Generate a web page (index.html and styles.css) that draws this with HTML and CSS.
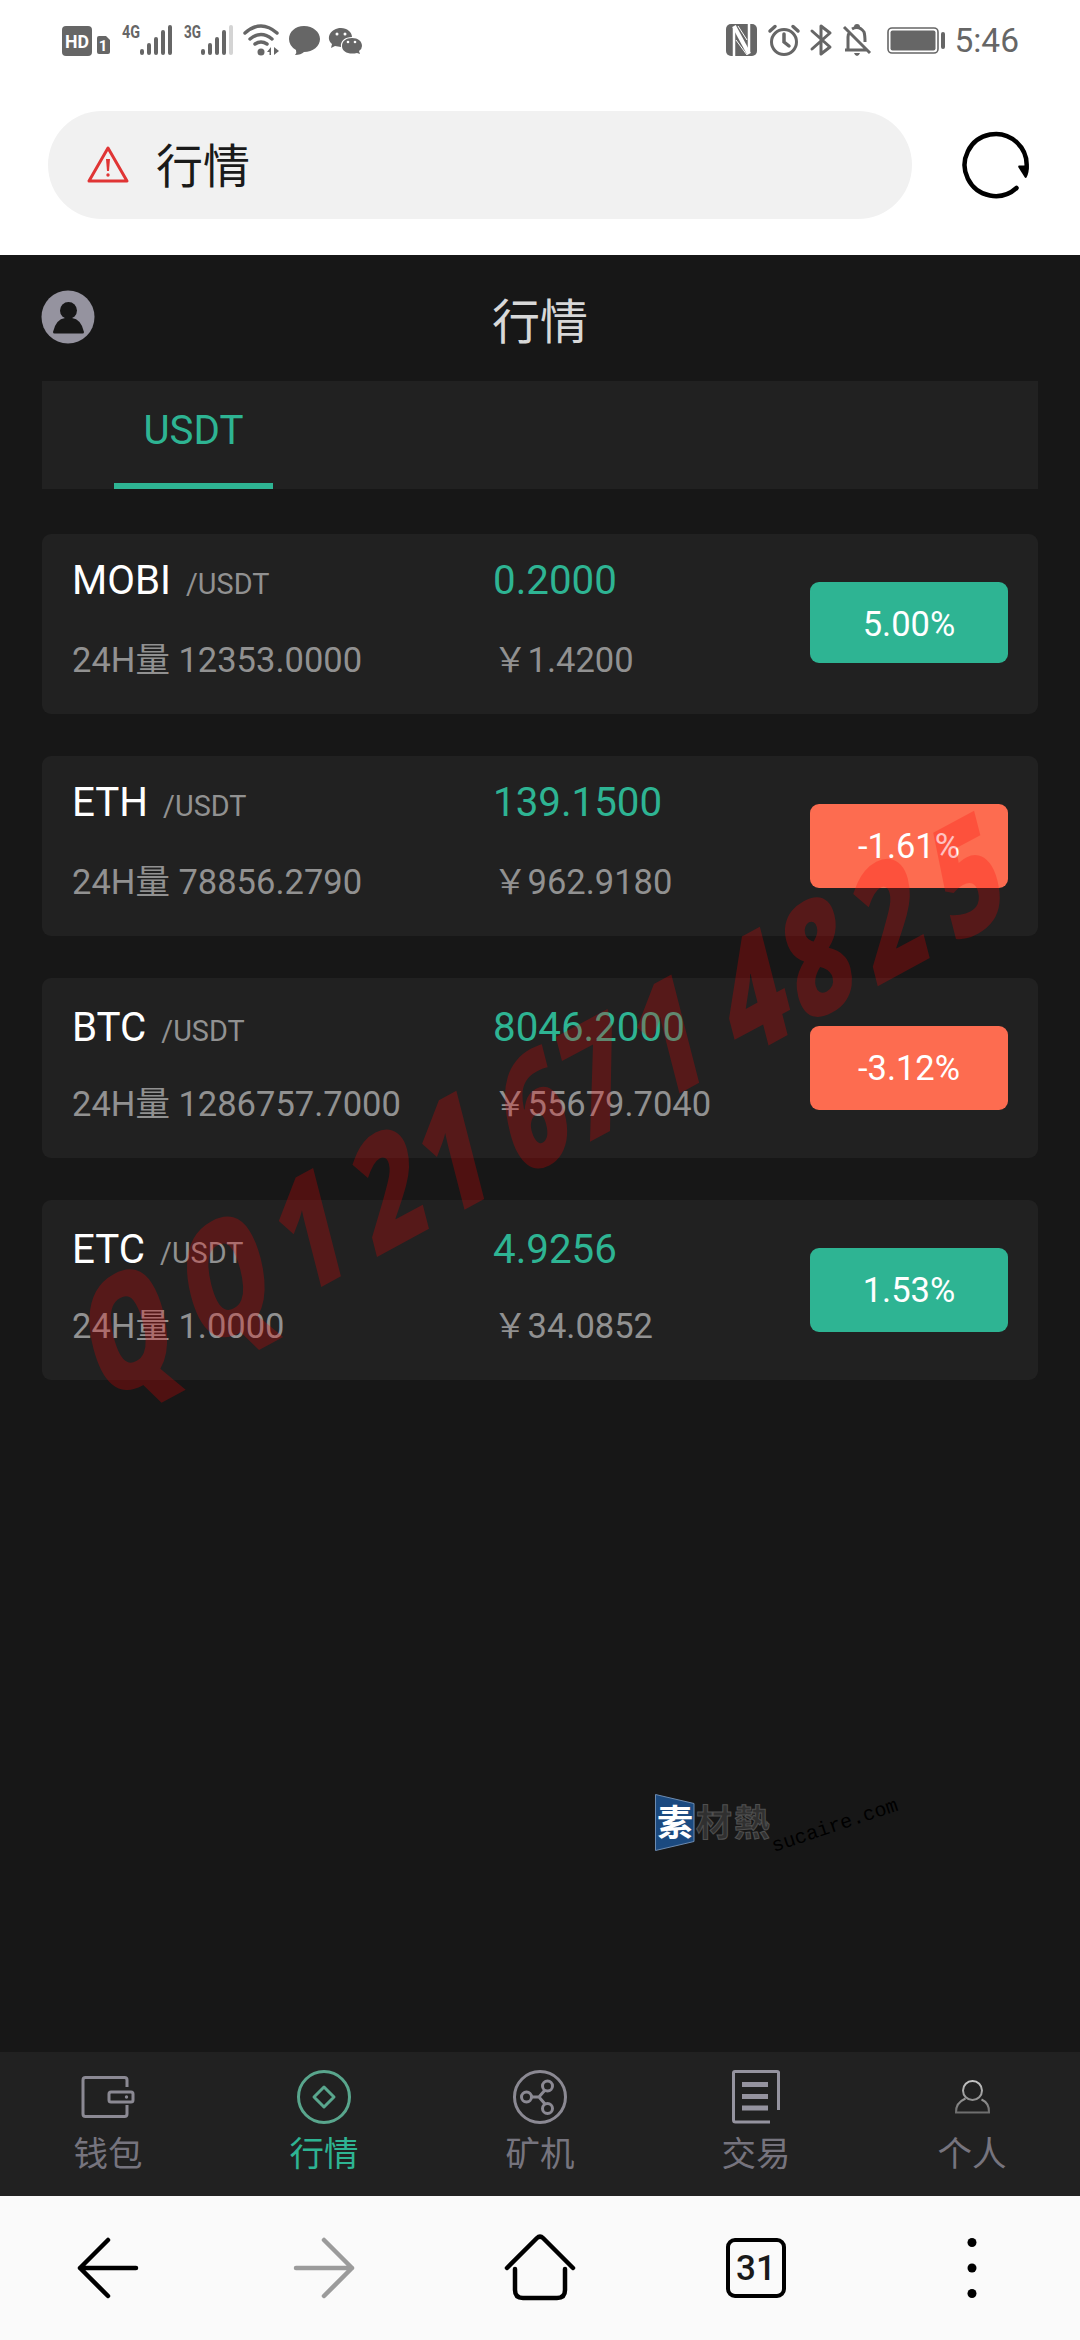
FILE: index.html
```html
<!DOCTYPE html>
<html lang="zh-CN">
<head>
    <meta charset="UTF-8">
    <meta name="viewport" content="width=device-width, initial-scale=1.0">
    <title>行情</title>
    <link rel="stylesheet" href="styles.css">
</head>
<body>
    <div class="status-bar">
        <div class="status-group">
            <svg width="32" height="32" viewBox="0 0 32 32">
                <rect x="0" y="2" width="30" height="30" rx="4" fill="#666"/>
                <text x="15" y="23.500" class="status-text hd" textLength="24" lengthAdjust="spacingAndGlyphs">HD</text>
            </svg>
            <svg width="24" height="32" viewBox="0 0 24 32">
                <path d="M5 12h7l4 4v12q0 2-2 2H5q-2 0-2-2V14q0-2 2-2z" fill="#666"/>
                <text x="9" y="27" class="status-text sim">1</text>
            </svg>
            <svg width="62" height="32" viewBox="0 0 62 32">
                <text x="4" y="14" class="status-text net" textLength="18" lengthAdjust="spacingAndGlyphs">4G</text>
                <path d="M24 27v2M31 21v8M38 15v14M45 8v21M52 3v26" class="bar"/>
            </svg>
            <svg width="60" height="32" viewBox="0 0 60 32">
                <text x="4" y="14" class="status-text net" textLength="17" lengthAdjust="spacingAndGlyphs">3G</text>
                <path d="M23 27v2M30 21v8M37 15v14M44 8v21" class="bar"/>
                <path d="M51 3v26" class="bar off"/>
            </svg>
            <svg width="44" height="32" viewBox="0 0 44 32">
                <g fill="none" stroke="#666" stroke-width="3.500" stroke-linecap="round">
                    <path d="M5 9Q21-5 37 9M10 15Q21 6 32 15M15 20Q21 16 27 20"/>
                </g>
                <circle cx="21" cy="28" r="3.500" fill="#666"/>
                <path d="M31 23v8h-1.500v-3H27zM34 23l5 4-5 4z" fill="#666"/>
            </svg>
            <svg width="41" height="32" viewBox="0 0 41 32">
                <path d="M20 2c9 0 16 6 16 13s-7 13-16 13q-3 3-9 3 2-2 1-5-7-4-7-11C5 8 11 2 20 2z" fill="#666"/>
            </svg>
            <svg width="40" height="32" viewBox="0 0 40 32">
                <path d="M16 4c6 0 11 4 11 9-7 0-12 4-11 10l-6-1-4 2 1-4c-7-6-1-16 9-16z" fill="#666"/>
                <path d="M27 14c6 0 10 3 10 8q0 3-3 5l1 3-3-1c-8 2-15-1-15-7 0-5 4-8 10-8z" fill="#666"/>
                <g fill="#fff"><circle cx="12" cy="10" r="1.500"/><circle cx="20" cy="10" r="1.500"/><circle cx="23" cy="18" r="1.300"/><circle cx="30" cy="18" r="1.300"/></g>
            </svg>
        </div>
        <div class="status-group">
            <svg width="42" height="32" viewBox="0 0 42 32">
                <rect x="0" y="0" width="31" height="32" rx="5" fill="#666"/>
                <path d="M8 3v29M23 29V0" stroke="#fff" stroke-width="2.500"/>
                <path d="M8 2l15 28" stroke="#fff" stroke-width="4"/>
                <path d="M10 16l11 15M12 2l9 14" stroke="#fff" stroke-width="1"/>
            </svg>
            <svg width="42" height="32" viewBox="0 0 42 32">
                <g fill="none" stroke="#666" stroke-width="3">
                    <circle cx="16" cy="18" r="12.500"/>
                    <path d="M2 7l5-4.500M30 7l-5-4.500M16 10v8l5 4" stroke-width="3.500" stroke-linecap="round"/>
                </g>
            </svg>
            <svg width="32" height="32" viewBox="0 0 32 32">
                <path d="M2 7l18 16-9 7V2l9 7L2 25" fill="none" stroke="#666" stroke-width="3" stroke-linejoin="round" stroke-linecap="round"/>
            </svg>
            <svg width="45" height="32" viewBox="0 0 45 32">
                <g fill="none" stroke="#666" stroke-width="3">
                    <path d="M2 3l26 26M3 26h22M6 25V13q0-3 2-5M10 5q7-4 12 3 1 3 1 10"/>
                </g>
                <path d="M12 3q0-3 3-3t3 3zM12 29h6q-1 3-3 3t-3-3z" fill="#666"/>
            </svg>
            <svg width="67" height="32" viewBox="0 0 67 32">
                <rect x="1" y="4" width="50" height="25" rx="4" fill="none" stroke="#666" stroke-width="1.600"/>
                <rect x="3.500" y="6.500" width="45" height="20" rx="2" fill="#666"/>
                <rect x="54" y="8" width="4" height="17" rx="2" fill="#666"/>
            </svg>
            <span class="clock">5:46</span>
        </div>
    </div>

    <div class="address-bar">
        <div class="address-field">
            <svg width="44" height="40" viewBox="0 0 44 40">
                <path d="M22 3L41 36H3z" fill="none" stroke="#e03535" stroke-width="3" stroke-linejoin="round"/>
                <path d="M20 14h4l-1 12h-2z" fill="#e03535"/>
                <circle cx="22" cy="30" r="1.700" fill="#e03535"/>
            </svg>
            <span class="address-title">行情</span>
        </div>
        <svg class="reload" width="68" height="68" viewBox="0 0 68 68">
            <path d="M54.500 57A31 31 0 1 1 64.500 37" fill="none" stroke="#000" stroke-width="4.500" stroke-linecap="round"/>
            <path d="M57 34.500h9.500q1 6-2 12-1 1-2-.5l-6-9.500q-1-2 .5-2z"/>
        </svg>
    </div>

    <div class="app">
        <header class="app-header">
            <svg width="52" height="52" viewBox="0 0 52 52">
                <circle cx="26" cy="26" r="26.500" fill="#95939f"/>
                <circle cx="26.500" cy="19.500" r="8.500" fill="#171717"/>
                <path d="M11 41q3-13 12-14h7q9 1 12 14 0 1.500-1.500 1.500h-28Q11 42.500 11 41z" fill="#171717"/>
            </svg>
            <h1>行情</h1>
        </header>

        <nav class="tabs">
            <a class="tab active">USDT</a>
        </nav>

        <main class="market-list">
            <div class="market">
                <div class="pair">
                    <p class="top"><span class="coin">MOBI</span><span class="base">/USDT</span></p>
                    <p class="sub">24H量 12353.0000</p>
                </div>
                <div class="price">
                    <p class="top">0.2000</p>
                    <p class="sub">￥1.4200</p>
                </div>
                <div class="change up short">5.00%</div>
            </div>
            <div class="market">
                <div class="pair">
                    <p class="top"><span class="coin">ETH</span><span class="base">/USDT</span></p>
                    <p class="sub">24H量 78856.2790</p>
                </div>
                <div class="price">
                    <p class="top">139.1500</p>
                    <p class="sub">￥962.9180</p>
                </div>
                <div class="change down">-1.61%</div>
            </div>
            <div class="market low">
                <div class="pair">
                    <p class="top"><span class="coin">BTC</span><span class="base">/USDT</span></p>
                    <p class="sub">24H量 1286757.7000</p>
                </div>
                <div class="price">
                    <p class="top">8046.2000</p>
                    <p class="sub">￥55679.7040</p>
                </div>
                <div class="change down">-3.12%</div>
            </div>
            <div class="market low">
                <div class="pair">
                    <p class="top"><span class="coin">ETC</span><span class="base">/USDT</span></p>
                    <p class="sub">24H量 1.0000</p>
                </div>
                <div class="price">
                    <p class="top">4.9256</p>
                    <p class="sub">￥34.0852</p>
                </div>
                <div class="change up">1.53%</div>
            </div>
        </main>
    </div>

    <nav class="tabbar">
        <a class="tabbar-item">
            <svg width="54" height="54" viewBox="0 0 54 54">
                <g fill="none" stroke="#8b8993" stroke-width="3">
                    <path d="M46 17V10q0-2.500-2.500-2.500h-39Q2 7.500 2 10v34q0 2.500 2.500 2.500h39q2.500 0 2.500-2.500v-9"/>
                    <rect x="28" y="22" width="24" height="10" rx="2"/>
                </g>
                <circle cx="45.500" cy="27" r="1.700" fill="#8b8993"/>
            </svg>
            <span>钱包</span>
        </a>
        <a class="tabbar-item active">
            <svg width="54" height="54" viewBox="0 0 54 54">
                <g fill="none" stroke="#59a68d" stroke-width="3">
                    <circle cx="27" cy="27" r="25.500"/>
                    <path d="M27 17l10 10-10 10-10-10z" stroke-linejoin="round"/>
                </g>
            </svg>
            <span>行情</span>
        </a>
        <a class="tabbar-item">
            <svg width="54" height="54" viewBox="0 0 54 54">
                <g fill="none" stroke="#8b8993" stroke-width="3">
                    <circle cx="27" cy="27" r="25.500"/>
                    <circle cx="13.500" cy="27" r="5"/>
                    <circle cx="34.500" cy="16" r="5"/>
                    <circle cx="34.500" cy="38.500" r="5"/>
                    <path d="M19 27h7l6-7M26 27l6 7"/>
                </g>
            </svg>
            <span>矿机</span>
        </a>
        <a class="tabbar-item">
            <svg width="54" height="54" viewBox="0 0 54 54">
                <path d="M49.500 40V2.500Q49.500 1.500 48 1.500H6Q4.500 1.500 4.500 3v47q0 2 2 2H41" fill="none" stroke="#95939f" stroke-width="3"/>
                <path d="M13 14.500h26M13 26.500h26M13 38h26" stroke="#95939f" stroke-width="5"/>
            </svg>
            <span>交易</span>
        </a>
        <a class="tabbar-item">
            <svg width="54" height="54" viewBox="0 0 54 54">
                <defs>
                    <linearGradient id="person" gradientUnits="userSpaceOnUse" x1="0" y1="10" x2="0" y2="44">
                        <stop offset="0" stop-color="#c8c8c8"/>
                        <stop offset="1" stop-color="#6a6a6a"/>
                    </linearGradient>
                </defs>
                <g fill="none" stroke="url(#person)" stroke-width="2">
                    <circle cx="27.500" cy="20.500" r="9.500"/>
                    <path d="M20.500 28.500Q10.500 33 11 42.500h33Q44.500 33 36.500 29.500"/>
                </g>
            </svg>
            <span>个人</span>
        </a>
    </nav>

    <nav class="browser-nav">
        <svg width="72" height="72" viewBox="0 0 72 72">
            <path d="M64 36H8M36 8L8 36l28 28" class="nav-line"/>
        </svg>
        <svg width="72" height="72" viewBox="0 0 72 72">
            <path d="M8 36h56M36 8l28 28-28 28" class="nav-line disabled"/>
        </svg>
        <svg width="72" height="72" viewBox="0 0 72 72">
            <path d="M3 36L33 6q3-3 6 0L69 36M11 37v21q0 8 8 8h34q8 0 8-8V37" class="nav-line"/>
        </svg>
        <div class="window-count">31</div>
        <svg width="72" height="72" viewBox="0 0 72 72">
            <circle cx="36" cy="10.500" r="4.500"/>
            <circle cx="36" cy="36" r="4.500"/>
            <circle cx="36" cy="61.500" r="4.500"/>
        </svg>
    </nav>

    <svg class="watermark" width="1080" height="800" viewBox="0 0 1080 800">
        <g transform="translate(128 629) rotate(-28.400) skewX(-14) scale(0.75 1)">
            <text y="55" x="0 148 276 396 493 615 708 819 948 1045 1155 1273">QQ1216714825</text>
        </g>
    </svg>

    <svg class="site-mark" width="260" height="80" viewBox="0 0 260 80">
        <path d="M5.500 4.500L44 13.500v38L5.500 60.500z" fill="#1b4a80" stroke="#6d8bb0"/>
        <text x="7" y="46" class="mark-char first">素</text>
        <text x="46" y="46" class="mark-char">材</text>
        <text x="84" y="46" class="mark-char">熱</text>
        <text transform="translate(124 62) rotate(-18.500)" class="mark-url">sucaire.com</text>
    </svg>
</body>
</html>
```

FILE: styles.css
```css
* {
    box-sizing: border-box;
}

body {
    position: relative;
    display: flex;
    flex-direction: column;
    width: 1080px;
    height: 2340px;
    margin: 0;
    background-color: #ffffff;
    font-family: Roboto, "Noto Sans CJK SC", sans-serif;
    overflow: hidden;
}

svg {
    display: block;
    flex: none;
    overflow: visible;
}

p, h1 {
    margin: 0;
    font-weight: 400;
}

/* phone status bar */
.status-bar {
    display: flex;
    justify-content: space-between;
    height: 81px;
    padding: 24px 61px 0 62px;
}

.status-group {
    display: flex;
}

.status-text {
    font-family: Roboto, sans-serif;
    font-weight: 700;
    fill: #666666;
}

.status-text.hd {
    font-size: 18px;
    fill: #ffffff;
    text-anchor: middle;
}

.status-text.sim {
    font-size: 15px;
    fill: #ffffff;
    text-anchor: middle;
}

.status-text.net {
    font-size: 18px;
}

.bar {
    fill: none;
    stroke: #666666;
    stroke-width: 4;
    stroke-linecap: round;
}

.bar.off {
    stroke: #d4d4d4;
}

.clock {
    font-size: 33.500px;
    line-height: 34px;
    color: #666666;
}

/* address bar */
.address-bar {
    display: flex;
    align-items: center;
    justify-content: space-between;
    height: 174px;
    padding: 0 50px 6px 48px;
}

.address-field {
    display: flex;
    align-items: center;
    gap: 26px;
    width: 864px;
    height: 108px;
    padding-left: 38px;
    border-radius: 54px;
    background-color: #f1f1f1;
    color: #1a1a1a;
    font-size: 47px;
    line-height: 54px;
}

.address-title {
    padding-top: 4px;
}

/* page */
.app {
    flex: 1;
    padding: 0 42px;
    background-color: #171717;
}

.app-header {
    display: grid;
    grid-template-columns: 52px 1fr 52px;
    height: 126px;
    padding-top: 36px;
}

.app-header h1 {
    font-size: 48px;
    line-height: 63px;
    text-align: center;
    color: #d8d8d8;
}

.tabs {
    height: 108px;
    padding-left: 72px;
    background-color: #212121;
}

.tab {
    display: block;
    width: 159px;
    height: 108px;
    border-bottom: 6px solid #2eb493;
    color: #2eb493;
    font-size: 40.300px;
    line-height: 100px;
    text-align: center;
}

.market-list {
    display: flex;
    flex-direction: column;
    gap: 42px;
    margin-top: 45px;
}

.market {
    display: flex;
    height: 180px;
    padding: 0 30px;
    border-radius: 9px;
    background-color: #212121;
}

.pair {
    width: 421px;
}

.price {
    width: 317px;
}

.market .top {
    height: 98px;
    padding-top: 22px;
    font-size: 40.300px;
    line-height: 50px;
    color: #2eb493;
}

.market.low .top {
    padding-top: 25px;
}

.market .coin {
    color: #ffffff;
}

.market .base {
    margin-left: 15px;
    font-size: 28.800px;
    color: #919191;
}

.market .sub {
    font-size: 34.500px;
    line-height: 56px;
    color: #919191;
    white-space: nowrap;
}

.change {
    width: 198px;
    height: 84px;
    margin-top: 48px;
    border-radius: 9px;
    color: #ffffff;
    font-size: 34.500px;
    line-height: 84px;
    text-align: center;
}

.change.short {
    height: 81px;
}

.up {
    background-color: #2eb493;
}

.down {
    background-color: #fd6c50;
}

/* app tab bar */
.tabbar {
    display: grid;
    grid-template-columns: repeat(5, 1fr);
    height: 144px;
    background-color: #212121;
}

.tabbar-item {
    display: flex;
    flex-direction: column;
    align-items: center;
    gap: 8px;
    padding-top: 18px;
    font-size: 34.500px;
    line-height: 44px;
    color: #76747e;
}

.tabbar-item.active {
    color: #2eb493;
}

/* browser navigation */
.browser-nav {
    display: grid;
    grid-template-columns: repeat(5, 1fr);
    align-items: center;
    justify-items: center;
    height: 144px;
    background-color: #fafafa;
}

.nav-line {
    fill: none;
    stroke: #000000;
    stroke-width: 4.500;
    stroke-linecap: round;
    stroke-linejoin: round;
}

.nav-line.disabled {
    stroke: #9b9b9b;
}

.window-count {
    width: 60px;
    height: 60px;
    border: 4px solid #000000;
    border-radius: 9px;
    color: #1a1a1a;
    font-size: 35px;
    font-weight: 500;
    line-height: 54px;
    text-align: center;
}

/* overlays */
.watermark {
    position: absolute;
    left: 0;
    top: 700px;
    fill: #ff0000;
    opacity: 0.24;
    font-family: "Open Sans", sans-serif;
    font-size: 152px;
    font-weight: 800;
    text-anchor: middle;
}

.site-mark {
    position: absolute;
    left: 650px;
    top: 1790px;
}

.mark-char {
    font-family: "Noto Sans CJK TC", sans-serif;
    font-size: 36px;
    font-weight: 700;
    fill: #303030;
    stroke: #505050;
    stroke-width: 1;
}

.mark-char.first {
    fill: #ffffff;
    stroke: none;
}

.mark-url {
    font-family: "Liberation Mono", monospace;
    font-size: 20px;
    fill: #000000;
}
```
